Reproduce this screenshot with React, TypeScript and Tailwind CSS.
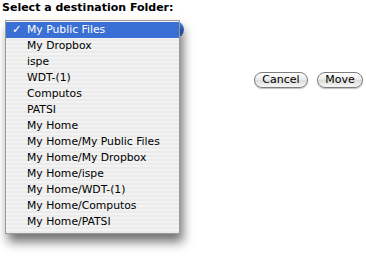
const folders = [
  "My Public Files",
  "My Dropbox",
  "ispe",
  "WDT-(1)",
  "Computos",
  "PATSI",
  "My Home",
  "My Home/My Public Files",
  "My Home/My Dropbox",
  "My Home/ispe",
  "My Home/WDT-(1)",
  "My Home/Computos",
  "My Home/PATSI",
];

function AquaButton({ label, width }: { label: string; width: string }) {
  return (
    <button
      className={`${width} h-[16px] rounded-full border border-[#7d7d7d] bg-[linear-gradient(#ffffff,#e9e9e9_50%,#dcdcdc_51%,#f6f6f6)] shadow-[0_1px_1px_rgba(0,0,0,0.25)] text-[11px] leading-[14px] text-black font-['DejaVu_Sans',sans-serif]`}
    >
      {label}
    </button>
  );
}

export default function App() {
  return (
    <div className="w-[366px] h-[256px] bg-white font-['DejaVu_Sans',sans-serif] text-black overflow-hidden">
      <div className="pl-[2px] pt-[1px] text-[11px] leading-[14px] font-bold">
        Select a destination Folder:
      </div>
      <div className="flex mt-[5px]">
        {/* popup menu */}
        <div className="relative ml-[5px]">
          <div className="absolute left-[170px] top-[1px] w-[9px] h-[17px] rounded-r-full bg-[linear-gradient(#6a9be6,#2f66cc_50%,#3d78d6)]" />
          <div className="relative w-[175px] h-[214px] border border-[#9a9a9a] pt-[1px] bg-[repeating-linear-gradient(#f3f3f3_0px,#f3f3f3_2px,#ebebeb_2px,#ebebeb_4px)] shadow-[3px_8px_10px_rgba(0,0,0,0.55)]">
            {folders.map((name, i) => (
              <div
                key={name}
                className={`flex items-center h-[16px] text-[10.8px] ${
                  i === 0 ? "bg-[#3a6fd6] text-white" : "text-black"
                }`}
              >
                <span className="w-[21px] shrink-0 pl-[6px] text-[11.5px]">{i === 0 ? "✓" : ""}</span>
                <span>{name}</span>
              </div>
            ))}
          </div>
        </div>
        {/* actions */}
        <div className="flex gap-[9px] ml-[74px] mt-[52px] h-[16px]">
          <AquaButton label="Cancel" width="w-[54px]" />
          <AquaButton label="Move" width="w-[46px]" />
        </div>
      </div>
    </div>
  );
}
